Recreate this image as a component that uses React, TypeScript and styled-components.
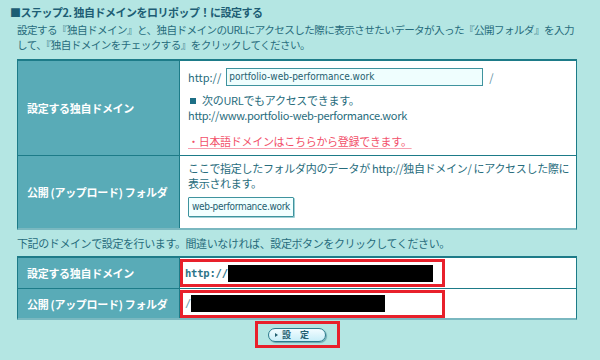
import React from 'react';
import styled, { createGlobalStyle } from 'styled-components';

const GlobalStyle = createGlobalStyle`
  html, body {
    margin: 0;
    padding: 0;
    background: #b4e6e3;
  }
  body {
    font-family: 'Noto Sans CJK JP', 'Noto Sans', sans-serif;
    color: #276c7c;
  }
`;

const App = () => {
  return (
    <Page>
      <GlobalStyle />
      <Title>■ステップ2. 独自ドメインをロリポップ！に設定する</Title>
      <Lead>
        設定する『独自ドメイン』と、独自ドメインのURLにアクセスした際に表示させたいデータが入った『公開フォルダ』を入力
        <br />
        して、『独自ドメインをチェックする』をクリックしてください。
      </Lead>

      <Table $gap={7}>
        <Row>
          <HeadCell $height={94}>設定する独自ドメイン</HeadCell>
          <ValueCell $padTop={6}>
            <InputLine>
              <span>http://</span>
              <DomainInput>portfolio-web-performance.work</DomainInput>
              <Slash>/</Slash>
            </InputLine>
            <Note>
              <Square />
              次のURLでもアクセスできます。
            </Note>
            <Note>http://www.portfolio-web-performance.work</Note>
            <RedLink>・日本語ドメインはこちらから登録できます。</RedLink>
          </ValueCell>
        </Row>
        <Row>
          <HeadCell $height={72}>公開 (アップロード) フォルダ</HeadCell>
          <ValueCell $padTop={5}>
            <Note>ここで指定したフォルダ内のデータが http://独自ドメイン/ にアクセスした際に</Note>
            <Note>表示されます。</Note>
            <FolderInput>web-performance.work</FolderInput>
          </ValueCell>
        </Row>
      </Table>

      <Confirm>下記のドメインで設定を行います。間違いなければ、設定ボタンをクリックしてください。</Confirm>

      <Table $gap={5}>
        <Row>
          <HeadCell $height={30}>設定する独自ドメイン</HeadCell>
          <ValueCell $padTop={0}>
            <Highlight>
              <Protocol>http://</Protocol>
              <Redacted $width={205} />
            </Highlight>
          </ValueCell>
        </Row>
        <Row>
          <HeadCell $height={29}>公開 (アップロード) フォルダ</HeadCell>
          <ValueCell $padTop={0}>
            <Highlight>
              <Protocol $light>/</Protocol>
              <Redacted $width={194} />
            </Highlight>
          </ValueCell>
        </Row>
      </Table>

      <ButtonRow>
        <ButtonFrame>
          <SubmitButton>
            <Arrow />
            設　定
          </SubmitButton>
        </ButtonFrame>
      </ButtonRow>
    </Page>
  );
};

export default App;

const Page = styled.div`
  width: 600px;
  height: 360px;
  box-sizing: border-box;
  padding: 4px 0 0 10px;
  overflow: hidden;
  font-size: 11px;
`;

const Title = styled.div`
  font-size: 11px;
  font-weight: bold;
  color: #1d5d74;
  line-height: 16px;
  letter-spacing: -0.5px;
`;

const Lead = styled.div`
  margin: 2px 0 0 7px;
  font-size: 10.6px;
  line-height: 15px;
  letter-spacing: -0.6px;
  white-space: nowrap;
`;

const Table = styled.div<{ $gap: number }>`
  margin: ${(p) => p.$gap}px 0 0 7px;
  width: 560px;
  border-top: 2px solid #1d7b88;
  border-right: 1px solid #1d7b88;
  border-bottom: 2px solid #7ab8c0;
  border-left: 1px solid #1d7b88;
  box-sizing: border-box;
  background: #fff;
`;

const Row = styled.div`
  display: grid;
  grid-template-columns: 162px 1fr;
  & + & {
    border-top: 1px solid #1d7b88;
  }
`;

const HeadCell = styled.div<{ $height: number }>`
  height: ${(p) => p.$height}px;
  display: flex;
  align-items: center;
  padding-left: 9px;
  background: #59abb7;
  border-right: 1px solid #1d7b88;
  color: #fff;
  font-weight: bold;
  font-size: 11px;
  letter-spacing: -0.3px;
`;

const ValueCell = styled.div<{ $padTop: number }>`
  padding: ${(p) => p.$padTop}px 0 0 8px;
  display: flex;
  flex-direction: column;
  justify-content: ${(p) => (p.$padTop === 0 ? 'center' : 'flex-start')};
  line-height: 15px;
`;

const InputLine = styled.div`
  display: flex;
  align-items: center;
  gap: 5px;
  height: 20px;
  margin-bottom: 6px;
`;

const DomainInput = styled.div`
  width: 257px;
  height: 18px;
  box-sizing: border-box;
  border: 1px solid #3f939e;
  background: #effefe;
  font-family: 'DejaVu Sans Condensed', 'Liberation Sans Narrow', sans-serif;
  font-size: 10px;
  line-height: 16px;
  padding-left: 2px;
  color: #24606f;
`;

const Slash = styled.span`
  margin-left: 1px;
  color: #5a8ea0;
`;

const Note = styled.div`
  display: flex;
  align-items: center;
  letter-spacing: -0.3px;
  white-space: nowrap;
`;

const Square = styled.span`
  width: 6px;
  height: 6px;
  background: #1d6f86;
  margin: 0 6px 0 2px;
`;

const RedLink = styled.div`
  margin-top: 11px;
  color: #f2506a;
  text-decoration: underline;
  text-decoration-color: #f7a0b0;
  text-underline-offset: 2px;
  letter-spacing: -0.3px;
`;

const FolderInput = styled.div`
  margin-top: 6px;
  width: 106px;
  height: 20px;
  box-sizing: border-box;
  border: 1px solid #3f939e;
  border-radius: 1px;
  background: #f2ffff;
  box-shadow: 1px 1px 0 #9ed0d5;
  font-family: 'DejaVu Sans Condensed', 'Liberation Sans Narrow', sans-serif;
  font-size: 10px;
  line-height: 18px;
  text-align: center;
  white-space: nowrap;
  letter-spacing: -0.3px;
  color: #24606f;
`;

const Confirm = styled.div`
  margin: 6px 0 0 7px;
  line-height: 15px;
  letter-spacing: -0.4px;
`;

const Highlight = styled.div`
  margin-left: -8px;
  width: 265px;
  height: 28px;
  box-sizing: border-box;
  border: 3px solid #e8202b;
  display: flex;
  align-items: center;
  padding-left: 2px;
`;

const Protocol = styled.span<{ $light?: boolean }>`
  font-family: 'DejaVu Sans Mono', 'Liberation Mono', monospace;
  font-weight: ${(p) => (p.$light ? 'normal' : 'bold')};
  color: ${(p) => (p.$light ? '#6b9aa8' : '#2d7488')};
  font-size: 10.5px;
  letter-spacing: -0.2px;
`;

const Redacted = styled.span<{ $width: number }>`
  width: ${(p) => p.$width}px;
  height: 17px;
  background: #000;
`;

const ButtonRow = styled.div`
  width: 560px;
  margin: 1px 0 0 7px;
  display: flex;
  justify-content: center;
`;

const ButtonFrame = styled.div`
  width: 85px;
  height: 27px;
  box-sizing: border-box;
  border: 3px solid #e8202b;
  display: flex;
  align-items: center;
  justify-content: center;
`;

const SubmitButton = styled.div`
  width: 58px;
  height: 14px;
  box-sizing: border-box;
  border: 1px solid #2d7b8c;
  border-radius: 7px;
  background: linear-gradient(#f2fcff, #c8eef8);
  box-shadow: 1px 1px 1px #6aa6b0;
  display: flex;
  align-items: center;
  padding-left: 6px;
  gap: 4px;
  font-size: 9px;
  font-weight: bold;
  color: #235f70;
  line-height: 1;
`;

const Arrow = styled.span`
  width: 0;
  height: 0;
  border-top: 2.5px solid transparent;
  border-bottom: 2.5px solid transparent;
  border-left: 3px solid #235f70;
`;
